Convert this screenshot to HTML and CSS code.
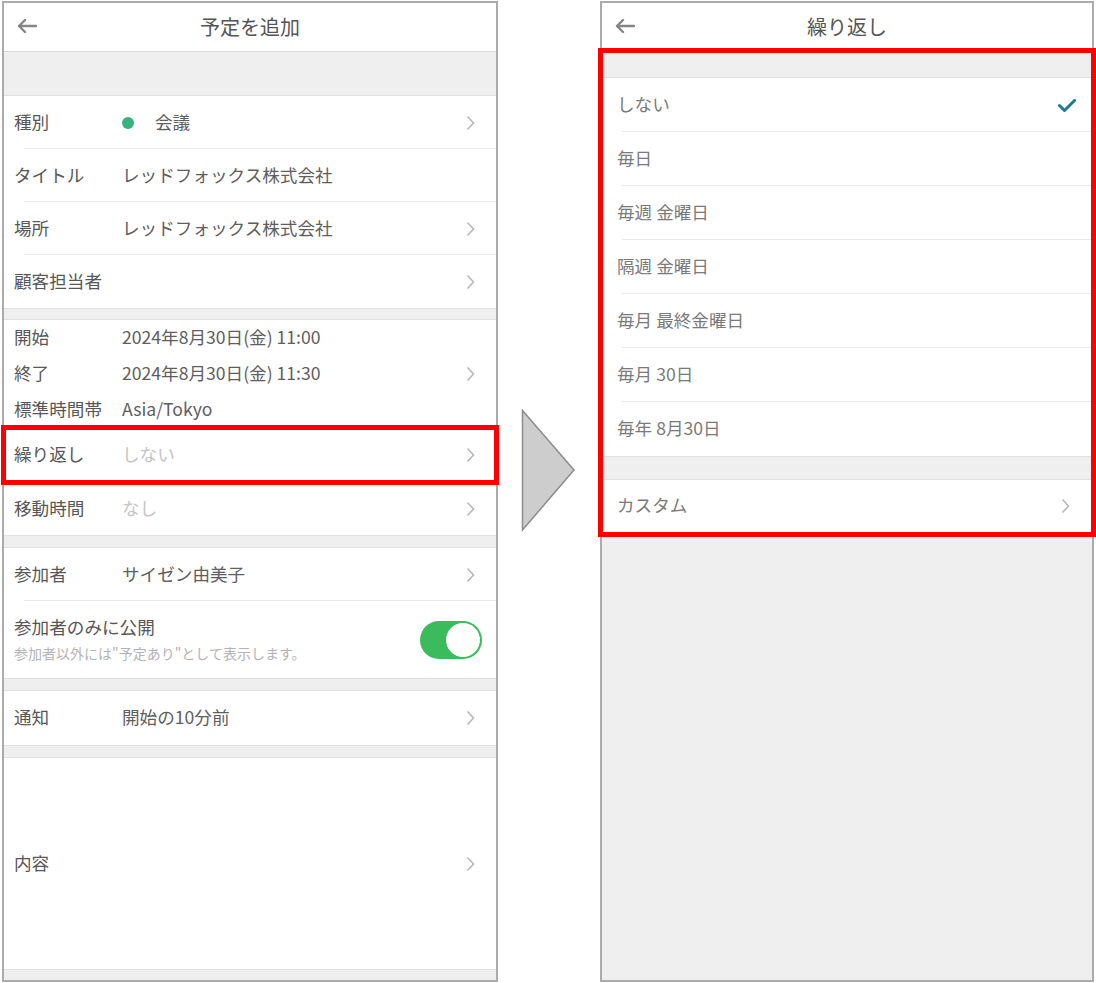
FILE: index.html
```html
<!DOCTYPE html>
<html lang="ja">
<head>
  <meta charset="UTF-8" />
  <meta name="viewport" content="width=device-width, initial-scale=1.0" />
  <title>予定を追加 - 繰り返し</title>
  <link rel="stylesheet" href="styles.css">
</head>
<body>
  <main class="page">

    <!-- left screen: add event -->
    <section class="phone">
      <header class="bar">
        <svg class="back" width="20" height="14" viewBox="0 0 20 14"><path d="M19 7H2M8 1L2 7l6 6" /></svg>
        <h1>予定を追加</h1>
        <span></span>
      </header>

      <div class="group group-first">
        <div class="row">
          <span class="label">種別</span>
          <span class="value"><i class="dot"></i>会議</span>
          <svg class="chev" width="9" height="16" viewBox="0 0 9 16"><path d="M1.5 1.5L7.5 8l-6 6.5" /></svg>
        </div>
        <div class="row">
          <span class="label">タイトル</span>
          <span class="value">レッドフォックス株式会社</span>
        </div>
        <div class="row">
          <span class="label">場所</span>
          <span class="value">レッドフォックス株式会社</span>
          <svg class="chev" width="9" height="16" viewBox="0 0 9 16"><path d="M1.5 1.5L7.5 8l-6 6.5" /></svg>
        </div>
        <div class="row">
          <span class="label">顧客担当者</span>
          <span class="value"></span>
          <svg class="chev" width="9" height="16" viewBox="0 0 9 16"><path d="M1.5 1.5L7.5 8l-6 6.5" /></svg>
        </div>
      </div>

      <div class="group group-time">
        <div class="row row-compact">
          <span class="label">開始</span>
          <span class="value">2024年8月30日(金) 11:00</span>
        </div>
        <div class="row row-compact">
          <span class="label">終了</span>
          <span class="value">2024年8月30日(金) 11:30</span>
          <svg class="chev" width="9" height="16" viewBox="0 0 9 16"><path d="M1.5 1.5L7.5 8l-6 6.5" /></svg>
        </div>
        <div class="row row-compact">
          <span class="label">標準時間帯</span>
          <span class="value">Asia/Tokyo</span>
        </div>
        <div class="row row-mark">
          <span class="label">繰り返し</span>
          <span class="value muted">しない</span>
          <svg class="chev" width="9" height="16" viewBox="0 0 9 16"><path d="M1.5 1.5L7.5 8l-6 6.5" /></svg>
        </div>
        <div class="row">
          <span class="label">移動時間</span>
          <span class="value muted">なし</span>
          <svg class="chev" width="9" height="16" viewBox="0 0 9 16"><path d="M1.5 1.5L7.5 8l-6 6.5" /></svg>
        </div>
      </div>

      <div class="group">
        <div class="row">
          <span class="label">参加者</span>
          <span class="value">サイゼン由美子</span>
          <svg class="chev" width="9" height="16" viewBox="0 0 9 16"><path d="M1.5 1.5L7.5 8l-6 6.5" /></svg>
        </div>
        <div class="row row-switch">
          <div class="stack">
            <span>参加者のみに公開</span>
            <small>参加者以外には&quot;予定あり&quot;として表示します。</small>
          </div>
          <span class="switch"><span class="knob"></span></span>
        </div>
      </div>

      <div class="group">
        <div class="row row-tall">
          <span class="label">通知</span>
          <span class="value">開始の10分前</span>
          <svg class="chev" width="9" height="16" viewBox="0 0 9 16"><path d="M1.5 1.5L7.5 8l-6 6.5" /></svg>
        </div>
      </div>

      <div class="group">
        <div class="row row-memo">
          <span class="label">内容</span>
          <span class="value"></span>
          <svg class="chev" width="9" height="16" viewBox="0 0 9 16"><path d="M1.5 1.5L7.5 8l-6 6.5" /></svg>
        </div>
      </div>
    </section>

    <div class="pointer">
      <svg width="56" height="124" viewBox="0 0 56 124"><polygon points="1.5,1.5 53,61 1.5,121" /></svg>
    </div>

    <!-- right screen: repeat options -->
    <section class="phone phone-right">
      <header class="bar">
        <svg class="back" width="20" height="14" viewBox="0 0 20 14"><path d="M19 7H2M8 1L2 7l6 6" /></svg>
        <h1>繰り返し</h1>
        <span></span>
      </header>

      <div class="options">
        <div class="group group-opts">
          <div class="opt">
            <span>しない</span>
            <svg class="check" width="18" height="13" viewBox="0 0 18 13"><path d="M1.5 6.5l5 5L16.5 1.5" /></svg>
          </div>
          <div class="opt"><span>毎日</span></div>
          <div class="opt"><span>毎週 金曜日</span></div>
          <div class="opt"><span>隔週 金曜日</span></div>
          <div class="opt"><span>毎月 最終金曜日</span></div>
          <div class="opt"><span>毎月 30日</span></div>
          <div class="opt"><span>毎年 8月30日</span></div>
        </div>
        <div class="group group-custom">
          <div class="opt opt-custom">
            <span>カスタム</span>
            <svg class="chev" width="9" height="16" viewBox="0 0 9 16"><path d="M1.5 1.5L7.5 8l-6 6.5" /></svg>
          </div>
        </div>
      </div>
    </section>

  </main>
</body>
</html>
```

FILE: styles.css
```css
body {
  margin: 0;
  font-family: "Noto Sans CJK JP", "Noto Sans", sans-serif;
  color: #555;
  background: #fff;
}
.page {
  display: flex;
  align-items: flex-start;
  padding: 1px 0 0 2px;
}
.phone {
  width: 496px;
  height: 981px;
  box-sizing: border-box;
  border: 2px solid #ababab;
  background: #efefef;
  display: flex;
  flex-direction: column;
}
.phone-right {
  width: 494px;
}
.bar {
  flex: none;
  height: 49px;
  box-sizing: border-box;
  padding: 0 13px 2px;
  background: #fff;
  border-bottom: 1px solid #d9d9d9;
  display: grid;
  grid-template-columns: 1fr auto 1fr;
  align-items: center;
}
.bar h1 {
  margin: 0;
  font-size: 20px;
  font-weight: 400;
  color: #555;
}
.back {
  fill: none;
  stroke: #858585;
  stroke-width: 2.4;
  stroke-linecap: round;
  stroke-linejoin: round;
}
.group {
  flex: none;
  margin-top: 11px;
  background: #fff;
  border-top: 1px solid #e1e1e1;
  border-bottom: 1px solid #e1e1e1;
}
.group-first {
  margin-top: 43px;
}
.group-time {
  margin-top: 10px;
}
.row {
  display: flex;
  align-items: center;
  height: 53px;
  box-sizing: border-box;
  padding: 0 21px 3px 10px;
  font-size: 17.6px;
  background: linear-gradient(#e9e9e9, #e9e9e9) no-repeat left 20px bottom / calc(100% - 20px) 1px;
}
.row:last-child,
.row-compact {
  background: none;
}
.row-compact {
  height: 36px;
}
.row-mark {
  height: 54px;
  outline: 5px solid #f00;
  outline-offset: -2px;
  position: relative;
}
.row-tall {
  height: 54px;
}
.row-memo {
  height: 211px;
}
.label {
  flex: none;
  width: 108px;
  color: #575757;
}
.value {
  flex: 1;
  display: flex;
  align-items: center;
  color: #5e5e5e;
}
.muted {
  color: #c4c4c4;
}
.dot {
  width: 12px;
  height: 12px;
  border-radius: 50%;
  background: #36b37e;
  margin: 3px 21px 0 0;
}
.chev {
  flex: none;
  margin-top: 3px;
  fill: none;
  stroke: #b5b5b5;
  stroke-width: 1.5;
}
.row-switch {
  height: 77px;
  padding-right: 14px;
  padding-bottom: 0;
  justify-content: space-between;
}
.stack {
  display: flex;
  flex-direction: column;
  gap: 4px;
  margin-bottom: 2px;
}
.stack span {
  line-height: 24px;
}
.stack small {
  font-size: 14px;
  line-height: 20px;
  color: #b3b3b3;
}
.switch {
  width: 62px;
  height: 38px;
  box-sizing: border-box;
  padding: 2px;
  border-radius: 19px;
  background: #3cbb5c;
  display: flex;
  justify-content: flex-end;
}
.knob {
  width: 34px;
  height: 34px;
  border-radius: 50%;
  background: #fff;
}
.pointer {
  flex: none;
  width: 102px;
  padding: 408px 0 0 23px;
  box-sizing: border-box;
}
.pointer polygon {
  fill: #cdcdcd;
  stroke: #8c8c8c;
  stroke-width: 1.5;
}
.options {
  flex: none;
  outline: 5px solid #f00;
  outline-offset: -1px;
  position: relative;
  padding-top: 25px;
}
.options .group {
  margin-top: 0;
}
.options .group-custom {
  margin-top: 22px;
}
.opt {
  display: flex;
  align-items: center;
  justify-content: space-between;
  height: 54px;
  box-sizing: border-box;
  padding: 0 16px 3px 15px;
  font-size: 17.6px;
  color: #7a7a7a;
  background: linear-gradient(#e9e9e9, #e9e9e9) no-repeat left 20px bottom / calc(100% - 20px) 1px;
}
.opt:last-child {
  background: none;
}
.opt .check,
.opt .chev {
  margin-top: 3px;
}
.opt-custom {
  height: 52px;
  padding-right: 22px;
}
.check {
  fill: none;
  stroke: #1d7b8b;
  stroke-width: 3;
  stroke-linecap: round;
  stroke-linejoin: round;
}
```
